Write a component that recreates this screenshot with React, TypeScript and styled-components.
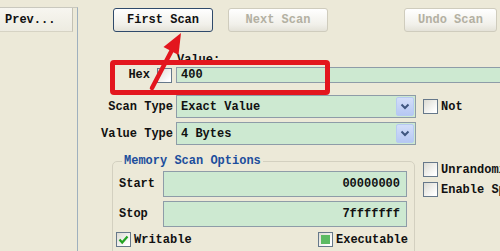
import React from 'react';
import styled, { createGlobalStyle } from 'styled-components';

const Global = createGlobalStyle`
  html, body { margin: 0; padding: 0; background: #ECE9D8; }
  body {
    font-family: "Liberation Mono", "DejaVu Sans Mono", monospace;
    font-size: 12px;
    color: #111;
  }
  * { box-sizing: border-box; }
`;

const Screen = styled.div`
  position: relative;
  width: 500px;
  height: 251px;
  overflow: hidden;
  display: flex;
  background: #ECE9D8;
`;

const ListPanel = styled.div`
  width: 78px;
  flex: none;
  margin-top: 7px;
  border-top: 1px solid #C9C8BE;
  border-right: 1px solid #9FB0BE;
`;

const ListHeader = styled.div`
  width: 73px;
  height: 24px;
  display: flex;
  align-items: center;
  padding-left: 5px;
  font-weight: bold;
  background: linear-gradient(#F7F6F0, #EDEBE1);
  border-right: 1px solid #C3C1B4;
  border-bottom: 1px solid #D6D3C4;
`;

const Main = styled.div`
  flex: 1;
  min-width: 0;
  display: flex;
  flex-direction: column;
  padding: 8px 0 0 32px;
`;

const ButtonRow = styled.div`
  display: flex;
  height: 24px;
`;

const Button = styled.button<{ $w: number; $disabled?: boolean; $gap?: number }>`
  width: ${(p) => p.$w}px;
  flex: none;
  height: 24px;
  margin-left: ${(p) => (p.$gap === undefined ? 'auto' : `${p.$gap}px`)};
  margin-right: 3px;
  padding: 0;
  font-family: inherit;
  font-size: 12px;
  font-weight: bold;
  color: ${(p) => (p.$disabled ? '#B3B0A2' : '#111')};
  background: linear-gradient(#FFFFFF, #F1F0EA 70%, #E4E2D8);
  border: 1px solid ${(p) => (p.$disabled ? '#CFCCBD' : '#2F4A6B')};
  border-radius: 3px;
`;

const ValueLabel = styled.div`
  margin: 21px 0 0 67px;
  height: 14px;
  line-height: 14px;
  font-weight: bold;
`;

const HexRow = styled.div`
  display: flex;
  height: 23px;
`;

const HexLabelCell = styled.div`
  width: 66px;
  flex: none;
  display: flex;
  align-items: center;
  justify-content: flex-end;
  gap: 7px;
  padding-right: 4px;
  font-weight: bold;
`;

const TextField = styled.div<{ $align?: string }>`
  flex: 1;
  height: 100%;
  display: flex;
  align-items: center;
  justify-content: ${(p) => p.$align || 'flex-start'};
  padding: 0 4px;
  background: #CDE9D1;
  border: 1px solid #8E9CA8;
  font-weight: bold;
`;

const HexField = styled(TextField)`
  border-right: none;
`;

const FormGrid = styled.div`
  display: grid;
  grid-template-columns: 63px 240px minmax(0, 1fr);
  column-gap: 3px;
  margin-top: 12px;
  row-gap: 4px;
`;

const RowLabel = styled.div`
  display: flex;
  align-items: center;
  justify-content: flex-end;
  white-space: nowrap;
  font-weight: bold;
`;

const Combo = styled.div`
  height: 23px;
  display: flex;
  align-items: center;
  padding: 1px;
  padding-left: 4px;
  background: #CDE9D1;
  border: 1px solid #8E9CA8;
  font-weight: bold;
`;

const ComboText = styled.span`
  flex: 1;
`;

const ComboButton = styled.div`
  width: 18px;
  height: 19px;
  display: flex;
  align-items: center;
  justify-content: center;
  border-radius: 2px;
  border: 1px solid #B7CAF3;
  background: linear-gradient(#D3DEF9, #B6C8F3);
`;

const Side = styled.div<{ $top?: number }>`
  display: flex;
  flex-direction: column;
  gap: 5px;
  min-width: 0;
  overflow: hidden;
  padding-left: 4px;
  padding-top: ${(p) => p.$top || 0}px;
  justify-content: ${(p) => (p.$top ? 'flex-start' : 'center')};
`;

const CheckLine = styled.label`
  display: flex;
  align-items: center;
  gap: 3px;
  height: 15px;
  white-space: nowrap;
  font-weight: bold;
`;

const Box = styled.span`
  width: 15px;
  height: 15px;
  flex: none;
  display: flex;
  align-items: center;
  justify-content: center;
  border: 1px solid #66788A;
  background: linear-gradient(135deg, #DCDBD3, #FFFFFF 85%);
`;

const FillMark = styled.span`
  width: 9px;
  height: 9px;
  background: #5CBB62;
`;

const Group = styled.fieldset`
  grid-column: 1 / 3;
  margin: 5px 1px 0 2px;
  padding: 0 0 12px 3px;
  border: 1px solid #D3D0C0;
  border-radius: 5px;
  min-width: 0;
`;

const Legend = styled.legend`
  margin-left: 6px;
  padding: 0 2px;
  line-height: 14px;
  color: #1C4E9C;
  font-weight: bold;
`;

const RangeRow = styled.div`
  display: flex;
  height: 26px;
  margin-top: 3px;
  & + & { margin-top: 4px; }
`;

const RangeLabel = styled.div`
  width: 47px;
  padding-left: 3px;
  display: flex;
  align-items: center;
  font-weight: bold;
`;

const RangeField = styled(TextField)`
  flex: none;
  width: 244px;
  padding-right: 6px;
`;

const FlagRow = styled.div`
  display: flex;
  justify-content: space-between;
  width: 292px;
  margin-top: 5px;
`;

const RedFrame = styled.div`
  position: absolute;
  left: 110px;
  top: 60px;
  width: 220px;
  height: 35px;
  border: 5px solid #E3161E;
  border-radius: 4px;
  pointer-events: none;
`;

const ArrowLayer = styled.svg`
  position: absolute;
  left: 0;
  top: 0;
  pointer-events: none;
`;

const Chevron = () => (
  <svg width="10" height="7" viewBox="0 0 10 7">
    <path d="M1.5 1.5 L5 5 L8.5 1.5" fill="none" stroke="#3F5680" strokeWidth="2" />
  </svg>
);

const Check = () => (
  <svg width="11" height="10" viewBox="0 0 11 10">
    <path d="M1.5 4.5 L4.2 7.5 L9.5 1.5" fill="none" stroke="#22A322" strokeWidth="2.2" />
  </svg>
);

export default function App() {
  return (
    <>
      <Global />
      <Screen>
        <ListPanel>
          <ListHeader>Prev...</ListHeader>
        </ListPanel>
        <Main>
          <ButtonRow>
            <Button $w={100} $gap={3}>First Scan</Button>
            <Button $w={100} $gap={12} $disabled>Next Scan</Button>
            <Button $w={93} $disabled>Undo Scan</Button>
          </ButtonRow>
          <ValueLabel>Value:</ValueLabel>
          <HexRow>
            <HexLabelCell>
              Hex
              <Box />
            </HexLabelCell>
            <HexField>400</HexField>
          </HexRow>
          <FormGrid>
            <RowLabel>Scan Type</RowLabel>
            <Combo>
              <ComboText>Exact Value</ComboText>
              <ComboButton><Chevron /></ComboButton>
            </Combo>
            <Side>
              <CheckLine><Box />Not</CheckLine>
            </Side>
            <RowLabel>Value Type</RowLabel>
            <Combo>
              <ComboText>4 Bytes</ComboText>
              <ComboButton><Chevron /></ComboButton>
            </Combo>
            <div />
            <Group>
              <Legend>Memory Scan Options</Legend>
              <RangeRow>
                <RangeLabel>Start</RangeLabel>
                <RangeField $align="flex-end">00000000</RangeField>
              </RangeRow>
              <RangeRow>
                <RangeLabel>Stop</RangeLabel>
                <RangeField $align="flex-end">7fffffff</RangeField>
              </RangeRow>
              <FlagRow>
                <CheckLine><Box><Check /></Box>Writable</CheckLine>
                <CheckLine><Box><FillMark /></Box>Executable</CheckLine>
              </FlagRow>
            </Group>
            <Side $top={13}>
              <CheckLine><Box />Unrandomizer</CheckLine>
              <CheckLine><Box />Enable Speedhack</CheckLine>
            </Side>
          </FormGrid>
        </Main>
        <RedFrame />
        <ArrowLayer width="500" height="251" viewBox="0 0 500 251">
          <line x1="152" y1="88" x2="172" y2="50" stroke="#E3161E" strokeWidth="4.5" strokeLinecap="round" />
          <polygon points="181,33 178.5,55 163.5,47" fill="#E3161E" />
        </ArrowLayer>
      </Screen>
    </>
  );
}
